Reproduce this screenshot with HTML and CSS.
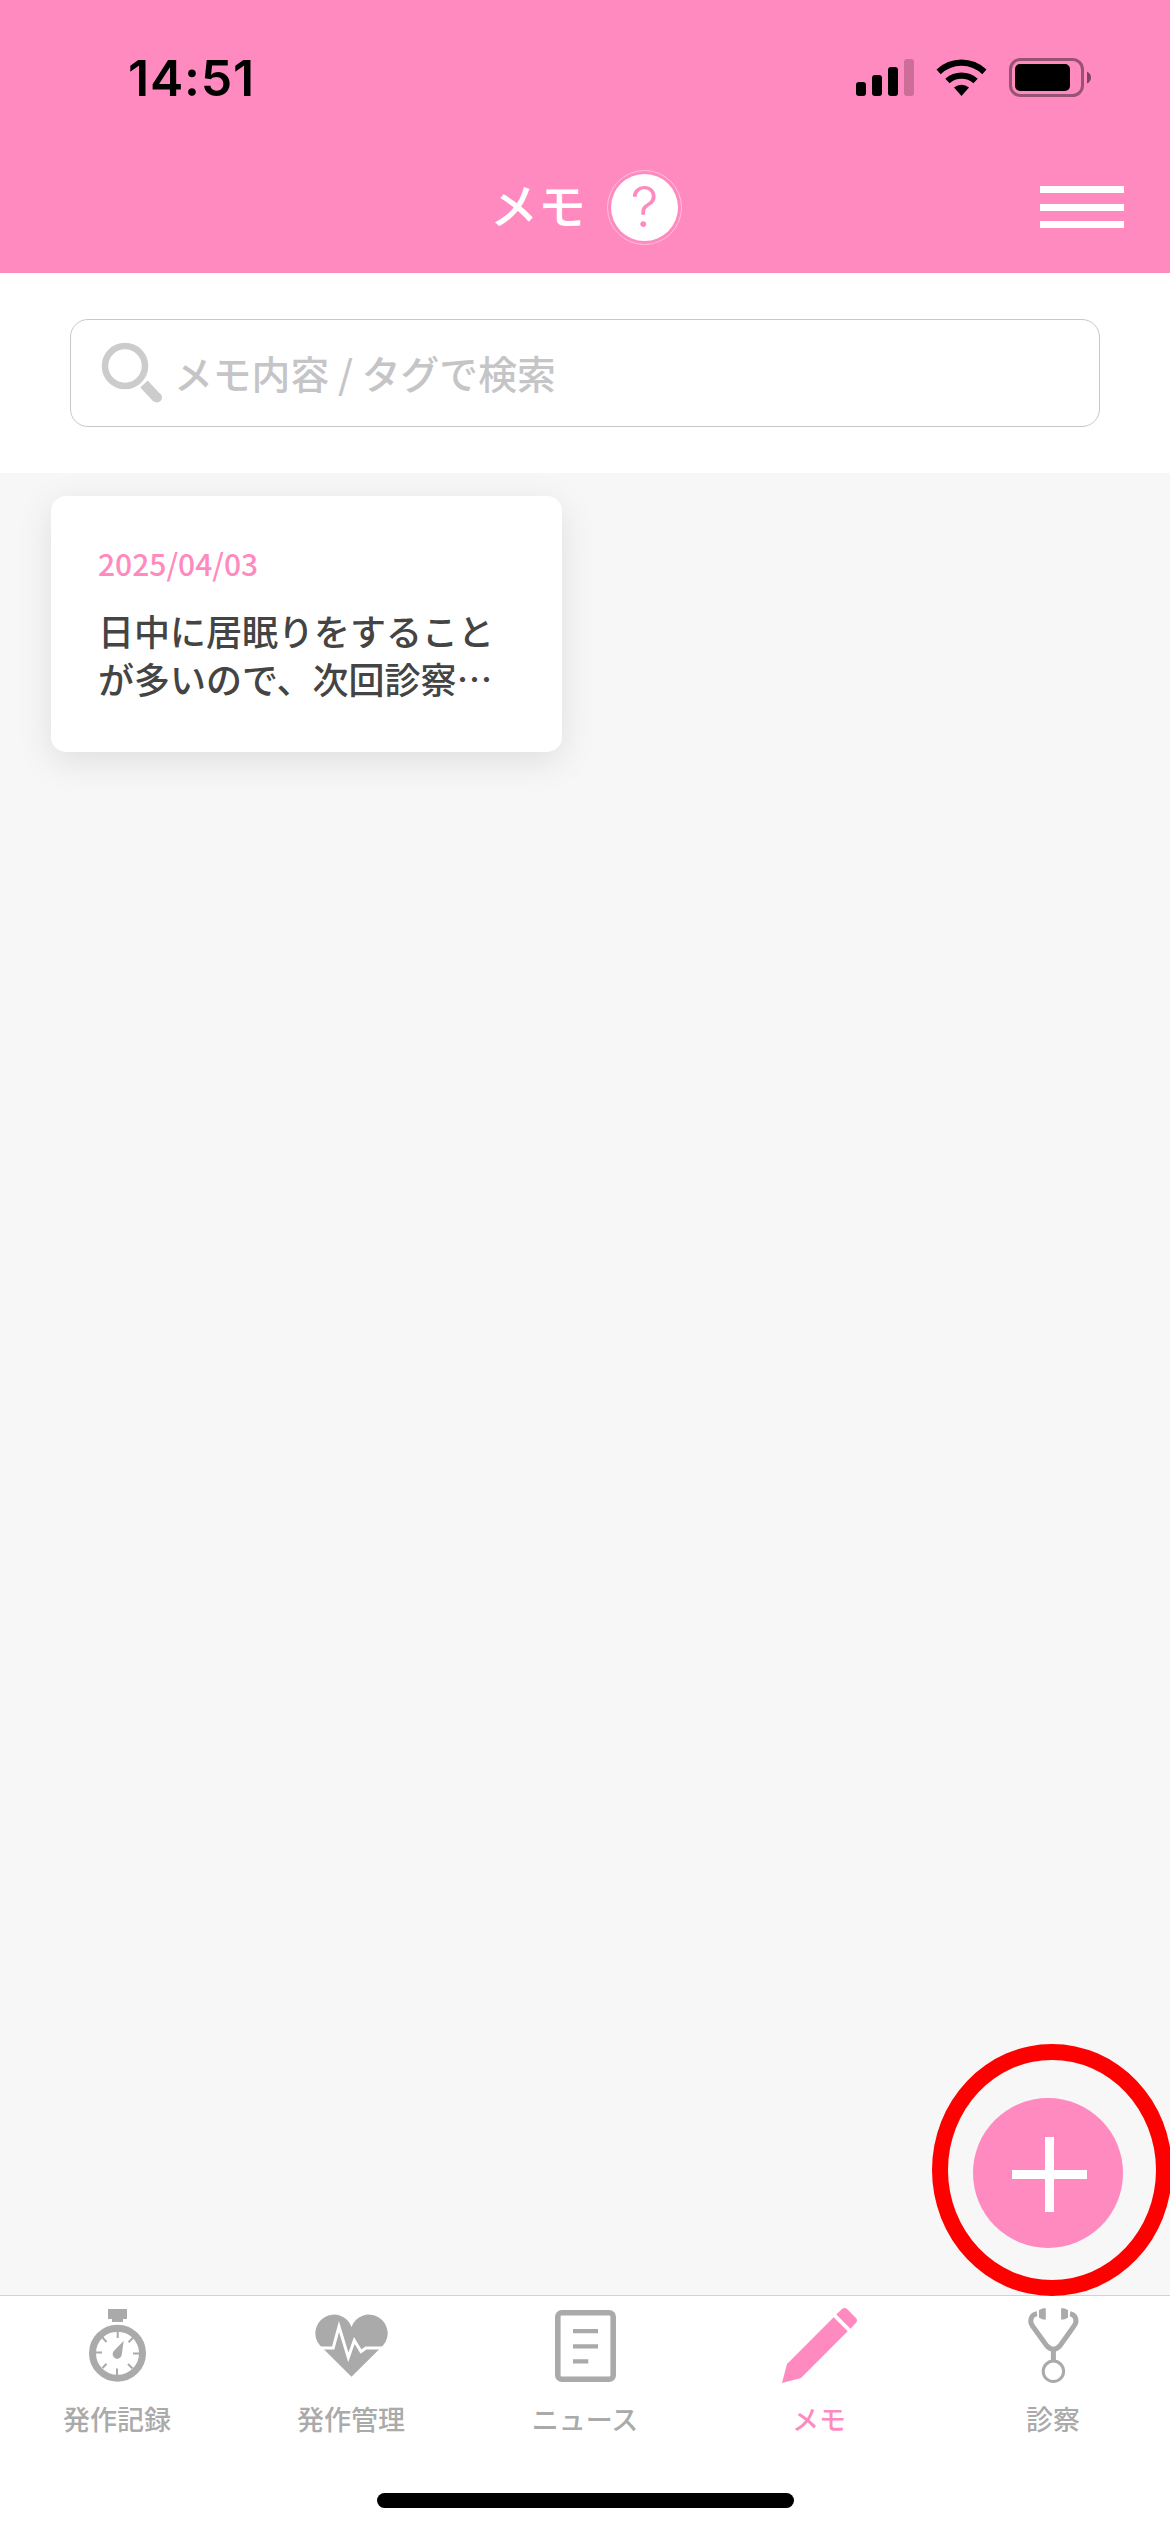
FILE: index.html
```html
<!DOCTYPE html>
<html lang="ja">
<head>
	<meta charset="UTF-8">
	<title>メモ</title>
	<link rel="stylesheet" href="styles.css">
</head>
<body>
	<div class="app">
		<div class="header">
			<div class="status">
				<span class="time">14:51</span>
				<svg class="status_icons" width="236" height="40" viewBox="0 0 236 40">
					<rect x="0" y="25" width="10" height="14" rx="3"/>
					<rect x="16" y="18" width="10" height="21" rx="3"/>
					<rect x="32" y="10" width="10" height="29" rx="3"/>
					<rect x="48" y="2" width="10" height="37" rx="3" opacity=".2"/>
					<path d="M80.5 12.6A36 36 0 0 1 130.5 12.6L126.3 17.2A30 30 0 0 0 84.7 17.2Z"/>
					<path d="M89.3 21.7A24 24 0 0 1 121.7 21.7L117.4 26.2A18 18 0 0 0 93.6 26.2Z"/>
					<path d="M98 30.5A11.5 11.5 0 0 1 113 30.5L105.5 39Z"/>
					<rect x="154.5" y="2.5" width="72" height="36" rx="10" fill="none" stroke="#000" stroke-width="3" opacity=".4"/>
					<rect x="159" y="7" width="55" height="27" rx="5"/>
					<path d="M231 14.5Q235 16.5 235 20.5T231 26.5Z" opacity=".5"/>
				</svg>
			</div>
			<div class="nav">
				<h1>メモ</h1>
				<a href="#" class="help">?</a>
				<a href="#" class="menu">
					<span></span>
					<span></span>
					<span></span>
				</a>
			</div>
		</div>

		<div class="search">
			<div class="search_box">
				<svg width="62" height="62" viewBox="0 0 62 62">
					<circle cx="24" cy="24" r="20" fill="none" stroke="#ccc" stroke-width="6.5"/>
					<path d="M43 42L56 56" fill="none" stroke="#ccc" stroke-width="10"/>
					<circle cx="56" cy="55.5" r="5" fill="#ccc"/>
				</svg>
				<span>メモ内容 / タグで検索</span>
			</div>
		</div>

		<div class="content">
			<div class="card">
				<p class="date">2025/04/03</p>
				<p class="text">日中に居眠りをすること<br>が多いので、次回診察…</p>
			</div>
			<a href="#" class="add">
				<svg width="150" height="150" viewBox="0 0 150 150">
					<path d="M72 39h9v33h33v9H81v33h-9V81H39v-9h33z" fill="#fff"/>
				</svg>
			</a>
			<div class="ring"></div>
		</div>

		<ul class="tabs">
			<li>
				<svg width="80" height="88" viewBox="0 0 80 88">
					<path d="M31 9h19v10h-4v3H35v-3h-4z" fill="currentColor"/>
					<circle cx="40.5" cy="53.2" r="25" fill="none" stroke="currentColor" stroke-width="7"/>
					<path d="M40.7 31v7M40 68.5v7M19 52.5h6M56 53.5h7M25.5 37.5l4 4.5M56 37.8l-4.5 4.5M25.5 68l4-4.2M55.5 68.5l-4.5-4.5" fill="none" stroke="currentColor" stroke-width="2"/>
					<path d="M46.7 40.7L36.4 51.5A4.6 4.6 0 1 0 44.8 54.5Z" fill="currentColor"/>
				</svg>
				<span>発作記録</span>
			</li>
			<li>
				<svg width="80" height="88" viewBox="0 0 80 88">
					<path d="M40.5 76.7L9 45.5A18.6 18.6 0 1 1 40.5 27A18.6 18.6 0 1 1 72 45.5Z" fill="currentColor"/>
					<path d="M5 48H22.2L28 26.5L37.3 57.5L43.3 40.5L50 51.5L55 48H76" fill="none" stroke="#fff" stroke-width="3" stroke-miterlimit="10"/>
				</svg>
				<span>発作管理</span>
			</li>
			<li>
				<svg width="80" height="88" viewBox="0 0 80 88">
					<rect x="12.8" y="12.8" width="55.4" height="66.4" rx="4" fill="none" stroke="currentColor" stroke-width="5.6"/>
					<path d="M28 31.2h25M28 46.4h25M28 61.4h15.3" fill="none" stroke="currentColor" stroke-width="4.3"/>
				</svg>
				<span>ニュース</span>
			</li>
			<li class="cur">
				<svg width="80" height="88" viewBox="0 0 80 88">
					<path d="M54.7 17.3L68.7 31.3L22 78L3 83L8 64Z" fill="currentColor"/>
					<path d="M57.3 14.5L62.7 9.3Q65.5 6.8 68.3 9.3L77 18Q79 20.2 77 22.8L71.5 28.7Z" fill="currentColor"/>
				</svg>
				<span>メモ</span>
			</li>
			<li>
				<svg width="80" height="88" viewBox="0 0 80 88">
					<path d="M24 13.8C18 14.5 16 21 19.5 26L33.5 45.5Q40.4 53 47.2 45.5L61 26C65 21 62.5 14.5 57 13.8" fill="none" stroke="currentColor" stroke-width="5"/>
					<path d="M40.4 49v11" stroke="currentColor" stroke-width="5"/>
					<circle cx="40.4" cy="71.3" r="10.2" fill="none" stroke="currentColor" stroke-width="3"/>
					<path d="M26 10l4-1.7h2.8v11.2H30l-4-1.7zM55 10l-4-1.7h-2.9v11.2H51l4-1.7z" fill="currentColor"/>
				</svg>
				<span>診察</span>
			</li>
		</ul>
		<div class="home"></div>
	</div>
</body>
</html>
```
FILE: styles.css
```css
*{
	margin: 0;
	padding: 0;
	box-sizing: border-box;
}
body{
	font-family: "Noto Sans CJK JP", sans-serif;
	background-color: #fff;
}
a{
	text-decoration: none;
}
svg{
	display: block;
}
.app{
	width: 1170px;
	height: 2532px;
	display: flex;
	flex-direction: column;
	overflow: hidden;
}
/*顶部*/
.header{
	height: 273px;
	background-color: #ff8abf;
}
.status{
	height: 141px;
	padding: 57px 78px 0 128px;
	display: flex;
	justify-content: space-between;
}
.status .time{
	margin-top: -9px;
	font: 600 50px/60px Inter, sans-serif;
	letter-spacing: 0.8px;
}
.nav{
	height: 132px;
	padding: 0 46px 0 490px;
	display: flex;
	align-items: center;
}
.nav h1{
	width: 117px;
	color: #fff;
	font-size: 48px;
	font-weight: 500;
	line-height: 70px;
	margin-top: -9px;
}
.help{
	width: 75px;
	height: 75px;
	border: 1px solid #ffc0dc;
	border-radius: 50%;
	background: #fff content-box;
	padding: 3px;
	color: #ff8abf;
	font: 300 56px/66px Inter, sans-serif;
	text-align: center;
}
.menu{
	width: 84px;
	margin-left: auto;
	display: grid;
	gap: 10.5px;
}
.menu span{
	height: 7px;
	background-color: #fff;
}
/*搜索*/
.search{
	height: 200px;
	padding: 46px 70px;
}
.search_box{
	height: 108px;
	border: 1px solid #c8c8c8;
	border-radius: 18px;
	padding: 0 30px;
	display: flex;
	align-items: center;
	gap: 12px;
	color: #c5c5c7;
	font-size: 38.8px;
	font-weight: 500;
}
.search_box span{
	margin: -3px 0 0 -1px;
}
/*列表*/
.content{
	flex: 1;
	position: relative;
	padding: 23px 51px;
	background-color: #f7f7f7;
}
.card{
	width: 511px;
	height: 256px;
	padding: 45px 47px;
	border-radius: 15px;
	background-color: #fff;
	box-shadow: 0 9px 36px rgba(0,0,0,.1);
}
.card .date{
	color: #ff8abf;
	font-size: 30px;
	font-weight: 500;
	line-height: 44px;
	margin-bottom: 21px;
}
.card .text{
	color: #444;
	font-size: 36px;
	font-weight: 500;
	line-height: 48px;
	white-space: nowrap;
}
.add{
	position: absolute;
	right: 47px;
	bottom: 47px;
	width: 150px;
	height: 150px;
	border-radius: 50%;
	background-color: #ff8abf;
}
.ring{
	position: absolute;
	right: -2px;
	bottom: -1px;
	width: 240px;
	height: 252px;
	border: 16px solid #f00;
	border-radius: 50%;
	z-index: 9;
}
/*底部*/
.tabs{
	height: 198px;
	border-top: 1px solid #d2d2d2;
	display: flex;
	list-style: none;
	color: #aaa;
}
.tabs li{
	flex: 1;
	padding-top: 4px;
	display: flex;
	flex-direction: column;
	align-items: center;
}
.tabs span{
	margin-top: 11px;
	font-size: 27px;
	font-weight: 500;
	line-height: 40px;
}
.tabs .cur{
	color: #ff8abf;
}
.home{
	width: 417px;
	height: 15px;
	margin: 0 auto 24px;
	border-radius: 8px;
	background-color: #000;
}
```
